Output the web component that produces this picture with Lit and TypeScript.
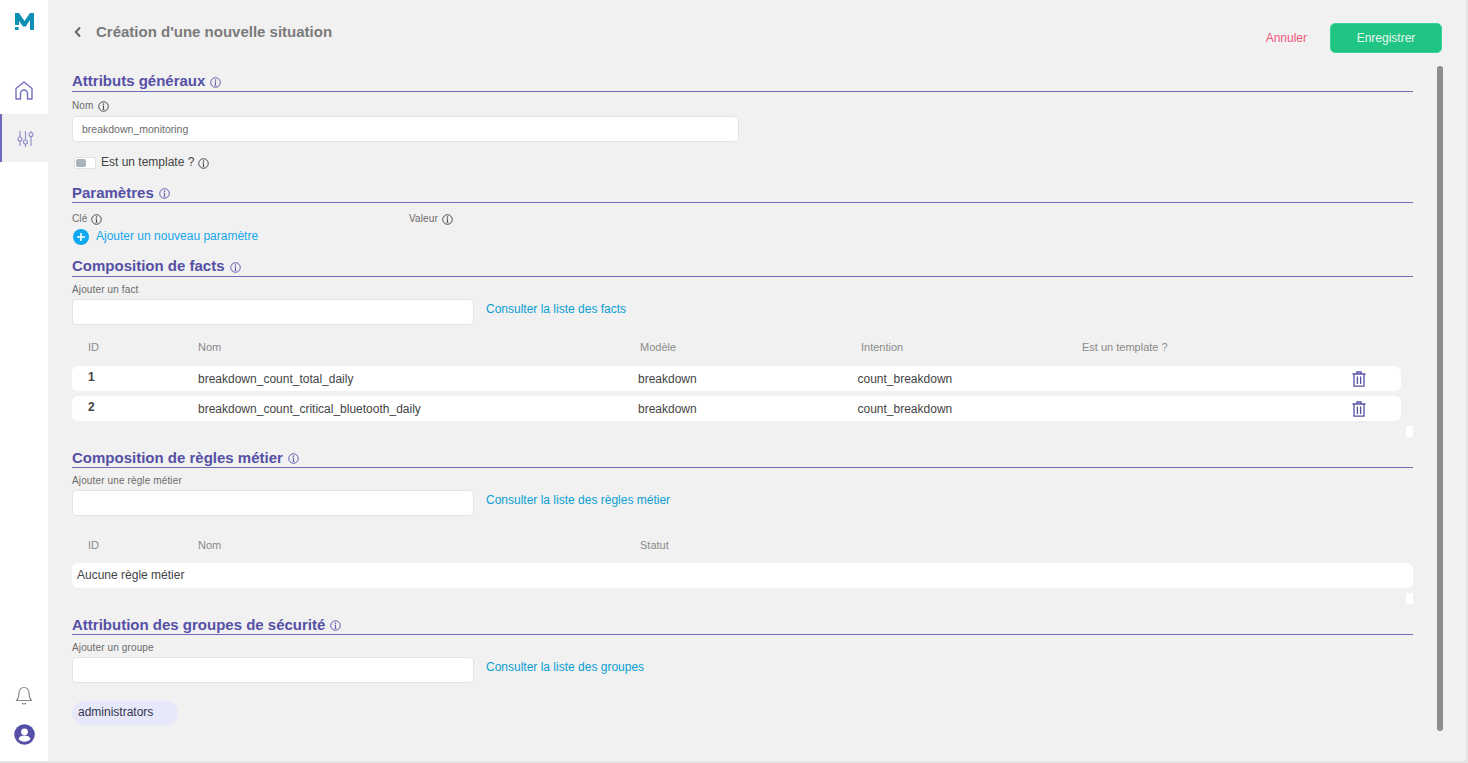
import { LitElement, html, css } from "lit";
import { customElement } from "lit/decorators.js";

const info = (size = 11, color = "#3f3f46") => html`<svg class="info" width=${size} height=${size} viewBox="0 0 12 12" fill="none" stroke=${color} stroke-width="1"><circle cx="6" cy="6" r="5.200"/><path d="M6 5.400V9M5 9h2M5 5.400h1"/><circle cx="6" cy="3.400" r=".45" fill=${color}/></svg>`;

const trash = html`<svg width="14" height="16" viewBox="0 0 14 16" fill="none" stroke="#5550a6" stroke-width="1.300"><path d="M.5 3h13M2 3v12.200h10V3"/><path d="M5 3V1h4v2"/><path d="M5.400 5.500v7.500M8.600 5.500v7.500"/></svg>`;

@customElement("app-root")
export class AppRoot extends LitElement {
  static styles = css`
    :host { display: block; height: 763px; width: 1468px; overflow: hidden; background: #f1f1f1; font-family: "Liberation Sans", Arial, sans-serif; color: #333; position: relative; }
    .app { display: flex; height: 761px; width: 1466px; border-right: 2px solid #e4e4e4; border-bottom: 2px solid #e4e4e4; }
    .side { width: 48px; flex: none; background: #fff; display: flex; flex-direction: column; align-items: center; }
    .logo { margin-top: 13px; height: 17px; display: flex; }
    .nav { height: 48px; width: 100%; display: flex; align-items: center; justify-content: center; box-sizing: border-box; }
    .home { margin-top: 36px; height: 48px; }
    .nav.active { background: #f1f1f1; border-left: 2px solid #6d68b8; padding-left: 1px; }
    .spacer { flex: 1; }
    .bell { height: 24px; margin-bottom: 14px; display: flex; }
    .user { height: 22px; margin-bottom: 15px; display: flex; }
    main { flex: 1; padding-left: 24px; position: relative; min-width: 0; box-sizing: border-box; }
    .top { height: 71px; display: flex; align-items: flex-start; box-sizing: border-box; width: 1370px; }
    .back { margin-top: 26px; margin-right: 12px; display: flex; }
    h1 { margin: 23px 0 0; font-size: 15px; line-height: 18px; font-weight: 700; color: #7a7a7a; flex: 1; }
    .cancel { margin-top: 31px; font-size: 12px; line-height: 15px; color: #f0587c; margin-right: 23px; }
    .save { margin-top: 23px; width: 112px; height: 30px; box-sizing: border-box; background: #20c584; border: 1px solid #3ed39a; border-radius: 5px; color: #e6f8f0; font-size: 12px; line-height: 28px; text-align: center; }
    .content { width: 1341px; }
    h2 { margin: 0; height: 21px; box-sizing: border-box; border-bottom: 1px solid #6f6bb8; font-size: 15px; line-height: 20px; font-weight: 700; color: #5550a6; display: flex; align-items: flex-start; gap: 5px; }
    h2 .info { margin-top: 6px; }
    h2.low { line-height: 22px; }
    .label { font-size: 10px; line-height: 12px; color: #6b6b6b; letter-spacing: .13px; display: flex; align-items: center; gap: 4px; }
    .field { height: 26px; background: #fff; border: 1px solid #e3e5e5; border-radius: 4px; box-sizing: border-box; font-size: 10.5px; line-height: 25px; color: #6b6b6b; padding-left: 9px; }
    .wide { width: 667px; margin-top: 4px; }
    .narrow { width: 402px; }
    .toggle-row { display: flex; align-items: center; margin-top: 12px; height: 18px; font-size: 12px; line-height: 16px; color: #444; margin-left: 2px; }
    .toggle-row .txt { margin-top: -2px; }
    .toggle { width: 22px; height: 12px; box-sizing: border-box; background: #fff; border: 1px solid #dfe1e3; border-radius: 2px; margin-right: 5px; padding: 1px; display: flex; }
    .toggle i { width: 10px; background: #aab2bc; border-radius: 2px; }
    .toggle-row .info { margin-left: 4px; }
    .params { display: flex; margin-top: 10px; }
    .params .label { width: 337px; }
    .add { display: flex; align-items: center; gap: 7px; height: 17px; margin-top: 3px; margin-left: 1px; font-size: 12px; color: #16a6ea; }
    .add span { margin-top: -2px; }
    .pick { display: flex; align-items: flex-start; gap: 12px; margin-top: 3px; }
    .pick a { font-size: 12px; line-height: 20px; color: #0a9fd3; text-decoration: none; }
    .thead { display: grid; font-size: 11px; line-height: 14px; color: #8a8a8a; padding-left: 16px; }
    .facts-head { grid-template-columns: 110px 442px 221px 221px 1fr; margin-top: 15px; }
    .rules-head { grid-template-columns: 110px 442px 1fr; margin-top: 22px; }
    .row { height: 25px; background: #fff; border-radius: 6px; display: grid; grid-template-columns: 110px 440px 219.500px 1fr 28px 21px; align-items: center; padding-left: 16px; color: #444; width: 1329px; box-sizing: border-box; }
    .row.first { margin-top: 12px; }
    .row + .row { margin-top: 5px; }
    .row span { font-size: 12px; }
    .row b { font-size: 12px; margin-top: -3px; }
    .trash { display: flex; }
    .empty { height: 25px; background: #fff; border-radius: 6px; padding-left: 5px; font-size: 12px; line-height: 25px; color: #444; margin-top: 11px; }
    .stub { width: 7px; height: 11px; background: #fff; margin: 5px 0 0 auto; }
    .s2 { margin-top: 10px; }
    .s3 { margin-top: 11px; }
    .s4 { margin-top: 10px; }
    .s5 { margin-top: 10px; }
    .sec-label { margin-top: 7px; }
    .sec-label.nom { margin-top: 8px; }
    .chip { width: 106px; height: 24px; box-sizing: border-box; background: #e8e8fb; border-radius: 12px; padding-left: 6px; font-size: 12px; line-height: 22px; color: #34344a; margin-top: 18px; }
    .thumb { position: absolute; left: 1389px; top: 66px; width: 6px; height: 665px; background: #8c8c8c; border-radius: 3px; }
  `;

  render() {
    return html`<div class="app">
      <aside class="side">
        <div class="logo"><svg width="19" height="17" viewBox="0 0 19 17"><path d="M0 0h4l5.500 8L15 0h4v17h-4V7l-4.200 6.500H8L4 8v4H0z" fill="#0f8fb5"/><rect y="14" width="3.500" height="3" fill="#0f8fb5"/></svg></div>
        <div class="nav home"><svg width="18" height="19" viewBox="0 0 18 19" fill="none" stroke="#7470bd" stroke-width="1.400" stroke-linejoin="round"><path d="M1 18V7.500L9 1l8 6.500V18h-4.500v-5.500a3.500 3.500 0 0 0-7 0V18z"/></svg></div>
        <div class="nav active"><svg width="17" height="17" viewBox="0 0 17 17" fill="none" stroke="#8f8bc9" stroke-width="1.100"><path d="M3 1v6M3 11v5M8.500 1v9M8.500 14v3M14 1v1.500M14 6.500V16"/><circle cx="3" cy="9" r="2"/><circle cx="8.500" cy="12" r="2"/><circle cx="14" cy="4.500" r="2"/></svg></div>
        <div class="spacer"></div>
        <div class="bell"><svg width="18" height="20" viewBox="0 0 18 20" fill="none" stroke="#8a8a8a" stroke-width="1.100" stroke-linejoin="round"><path d="M9 1.500c-3 0-5 2.400-5 5.500 0 4-1 6-2.500 7.500h15C15 13 14 11 14 7c0-3.100-2-5.500-5-5.500z"/><path d="M7 17c.5 1.200 3.500 1.200 4 0"/></svg></div>
        <div class="user"><svg width="21" height="21" viewBox="0 0 21 21"><circle cx="10.500" cy="10.500" r="10.300" fill="#5550a6"/><circle cx="10.500" cy="7.800" r="3.400" fill="#fff"/><path d="M4.500 15c1-2.400 3-3.400 6-3.400s5 1 6 3.400c-1.400 1.700-3.600 2.800-6 2.800s-4.600-1.100-6-2.800z" fill="#fff"/></svg></div>
      </aside>
      <main>
        <div class="top">
          <span class="back"><svg width="12" height="12" viewBox="0 0 12 12" fill="none" stroke="#666" stroke-width="2"><path d="M8 1.500 3.800 6 8 10.500"/></svg></span>
          <h1>Création d'une nouvelle situation</h1>
          <span class="cancel">Annuler</span>
          <span class="save">Enregistrer</span>
        </div>
        <div class="content">
          <h2>Attributs généraux ${info(11, "#5550a6")}</h2>
          <div class="label sec-label nom">Nom ${info()}</div>
          <div class="field wide">breakdown_monitoring</div>
          <div class="toggle-row"><span class="toggle"><i></i></span><span class="txt">Est un template ?</span> ${info()}</div>

          <h2 class="s2 low">Paramètres ${info(11, "#5550a6")}</h2>
          <div class="params"><div class="label">Clé ${info()}</div><div class="label">Valeur ${info()}</div></div>
          <div class="add"><svg width="16" height="16" viewBox="0 0 16 16"><circle cx="8" cy="8" r="8" fill="#0ea9f0"/><path d="M8 4v8M4 8h8" stroke="#fff" stroke-width="1.600"/></svg><span>Ajouter un nouveau paramètre</span></div>

          <h2 class="s3">Composition de facts ${info(11, "#5550a6")}</h2>
          <div class="label sec-label">Ajouter un fact</div>
          <div class="pick"><div class="field narrow"></div><a>Consulter la liste des facts</a></div>
          <div class="thead facts-head"><span>ID</span><span>Nom</span><span>Modèle</span><span>Intention</span><span>Est un template ?</span></div>
          <div class="row first"><b>1</b><span>breakdown_count_total_daily</span><span>breakdown</span><span>count_breakdown</span><span class="trash">${trash}</span></div>
          <div class="row"><b>2</b><span>breakdown_count_critical_bluetooth_daily</span><span>breakdown</span><span>count_breakdown</span><span class="trash">${trash}</span></div>
          <div class="stub"></div>

          <h2 class="s4 low">Composition de règles métier ${info(11, "#5550a6")}</h2>
          <div class="label sec-label">Ajouter une règle métier</div>
          <div class="pick"><div class="field narrow"></div><a>Consulter la liste des règles métier</a></div>
          <div class="thead rules-head"><span>ID</span><span>Nom</span><span>Statut</span></div>
          <div class="empty">Aucune règle métier</div>
          <div class="stub"></div>

          <h2 class="s5 low">Attribution des groupes de sécurité ${info(11, "#5550a6")}</h2>
          <div class="label sec-label">Ajouter un groupe</div>
          <div class="pick"><div class="field narrow"></div><a>Consulter la liste des groupes</a></div>
          <div class="chip">administrators</div>
        </div>
        <div class="thumb"></div>
      </main>
    </div>`;
  }
}
